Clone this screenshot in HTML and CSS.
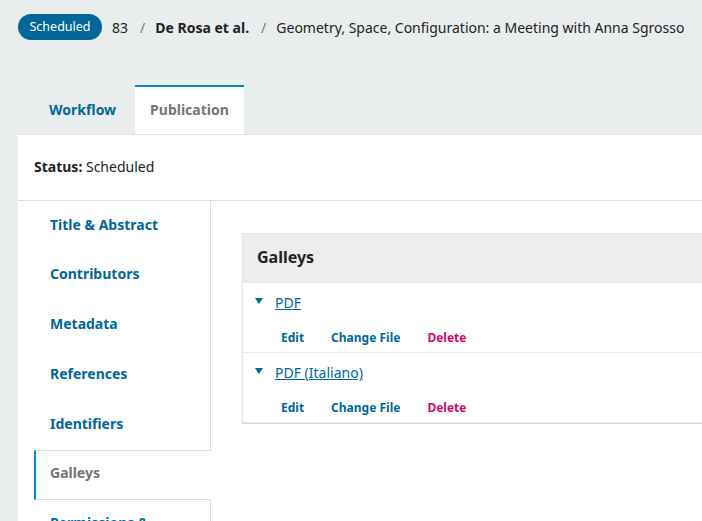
FILE: index.html
```html
<!DOCTYPE html>
<html lang="en">
<head>
    <meta charset="UTF-8">
    <title>Publication</title>
    <link rel="stylesheet" href="styles.css">
</head>
<body>
    <div id="page">
        <div class="header">
            <span class="badge">Scheduled</span>
            <span class="crumb">83</span>
            <span class="sep">/</span>
            <span class="crumb strong">De Rosa et al.</span>
            <span class="sep">/</span>
            <span class="crumb">Geometry, Space, Configuration: a Meeting with Anna Sgrosso</span>
        </div>
        <div class="tabs">
            <a class="tab">Workflow</a>
            <a class="tab active">Publication</a>
        </div>
        <div class="panel">
            <div class="status"><b>Status:</b> Scheduled</div>
            <div class="body">
                <div class="side">
                    <a class="side_item">Title &amp; Abstract</a>
                    <a class="side_item">Contributors</a>
                    <a class="side_item">Metadata</a>
                    <a class="side_item">References</a>
                    <a class="side_item">Identifiers</a>
                    <a class="side_item active">Galleys</a>
                    <a class="side_item">Permissions &amp; Disclosure</a>
                </div>
                <div class="content">
                    <div class="card">
                        <div class="card_head">Galleys</div>
                        <div class="row">
                            <div class="row_title"><span class="arrow"></span><a>PDF</a></div>
                            <div class="actions">
                                <a>Edit</a><a>Change File</a><a class="del">Delete</a>
                            </div>
                        </div>
                        <div class="row">
                            <div class="row_title"><span class="arrow"></span><a>PDF (Italiano)</a></div>
                            <div class="actions">
                                <a>Edit</a><a>Change File</a><a class="del">Delete</a>
                            </div>
                        </div>
                    </div>
                </div>
            </div>
        </div>
    </div>
</body>
</html>
```

FILE: styles.css
```css
body{
    margin: 0;
    background: #eaedee;
    font-family: "Noto Sans", "Open Sans", sans-serif;
    font-size: 14px;
    color: #222;
    overflow: hidden;
}
#page{
    padding-left: 18px;
    width: 960px;
}
.header{
    display: flex;
    align-items: center;
    height: 26px;
    margin-top: 14px;
}
.badge{
    display: inline-block;
    height: 26px;
    line-height: 26px;
    padding: 0 11.5px;
    border-radius: 13px;
    background: #006798;
    color: white;
    font-size: 12.5px;
    margin-right: 10px;
}
.crumb.strong{
    font-weight: bold;
}
.sep{
    color: #777;
    margin: 0 10px 0 12px;
}
.tabs{
    display: flex;
    gap: 4px;
    padding-left: 16px;
    margin-top: 45px;
}
.tab{
    display: block;
    height: 47px;
    line-height: 45px;
    padding: 0 15px;
    border-top: 2px solid transparent;
    font-weight: bold;
    color: #006798;
}
.tab.active{
    background: white;
    border-top-color: #008acb;
    color: #757575;
}
.panel{
    background: white;
    border-top: 1px solid #dfe1e2;
}
.status{
    height: 65px;
    line-height: 63px;
    padding-left: 16px;
    border-bottom: 1px solid #ddd;
}
.body{
    display: flex;
}
.side{
    width: 176px;
    padding-left: 16px;
    border-right: 1px solid #ddd;
    height: 400px;
}
.side_item{
    display: block;
    box-sizing: border-box;
    height: 49.8px;
    padding: 12.5px 16px 0 14px;
    border-left: 2px solid transparent;
    border-top: 1px solid transparent;
    border-bottom: 1px solid transparent;
    font-weight: bold;
    color: #006798;
}
.side_item.active{
    background: white;
    border-color: #ddd;
    border-left-color: #008acb;
    margin-right: -1px;
    color: #757575;
}
.content{
    flex: 1;
    padding: 32px 0 0 31px;
}
.card{
    border: 1px solid #e6e6e6;
    box-shadow: 0 1px 1px rgba(0, 0, 0, 0.15);
}
.card_head{
    height: 48px;
    line-height: 46px;
    padding-left: 14px;
    background: #ededed;
    font-size: 16px;
    font-weight: bold;
    color: #222;
}
.row{
    height: 70px;
    box-sizing: border-box;
    padding-top: 9px;
    border-top: 1px solid #ececec;
}
.row:first-of-type{
    border-top: none;
}
.row_title{
    display: flex;
    align-items: center;
    height: 20px;
    padding-left: 12px;
}
.arrow{
    width: 0;
    height: 0;
    border-left: 4px solid transparent;
    border-right: 4px solid transparent;
    border-top: 6px solid #006798;
    margin-right: 12px;
    margin-top: -3px;
}
.row_title a{
    color: #006798;
    text-decoration: underline;
}
.actions{
    display: flex;
    gap: 27px;
    padding-left: 38px;
    margin-top: 17px;
    font-size: 12px;
    font-weight: bold;
}
.actions a{
    color: #006798;
}
.actions a.del{
    color: #d00a6c;
}
```
